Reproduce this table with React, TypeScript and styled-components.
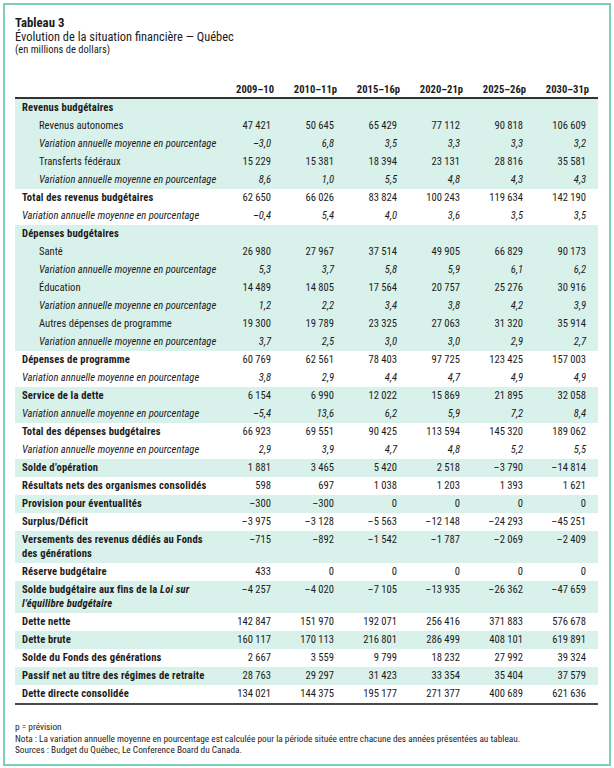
import React from "react";
import styled, { createGlobalStyle } from "styled-components";

const GlobalStyle = createGlobalStyle`
  html, body {
    margin: 0;
    padding: 0;
    background: #ffffff;
  }
  body {
    font-family: "Roboto Condensed", "Liberation Sans Narrow", "DejaVu Sans Condensed", sans-serif;
    color: #1c1c1c;
  }
`;

const Frame = styled.div`
  box-sizing: border-box;
  margin: 3px;
  width: 608px;
  height: 763px;
  border: 2px solid #7ccfb8;
  padding: 11px 11px 0 10px;
`;

const Title = styled.div`
  font-size: 12.8px;
  line-height: 14px;
  font-weight: bold;
`;

const Subtitle = styled.div`
  font-size: 12.4px;
  line-height: 14px;
`;

const Unit = styled.div`
  font-size: 10.5px;
  line-height: 12px;
`;

const Table = styled.table`
  margin-top: 27px;
  width: 583px;
  border-collapse: collapse;
  table-layout: fixed;
  font-size: 10.6px;
`;

const HeadCell = styled.th`
  text-align: right;
  font-weight: bold;
  line-height: 14px;
  padding: 0 9px 0 0;
  border-bottom: 2px solid #333333;
  white-space: nowrap;
`;

const Row = styled.tr<{ $shade?: boolean; $last?: boolean }>`
  background: ${(p) => (p.$shade ? "#d9f1eb" : "transparent")};
  border-bottom: ${(p) => (p.$last ? "2px solid #4a4a4a" : "none")};
`;

const Label = styled.td<{ $indent?: boolean; $bold?: boolean; $italic?: boolean }>`
  vertical-align: top;
  line-height: 14px;
  padding: 2px 0 2px ${(p) => (p.$indent ? 24 : 7)}px;
  font-weight: ${(p) => (p.$bold ? "bold" : "normal")};
  font-style: ${(p) => (p.$italic ? "italic" : "normal")};
  letter-spacing: ${(p) => (p.$bold ? "0.15px" : "0")};
  white-space: nowrap;
`;

const Value = styled.td<{ $italic?: boolean }>`
  vertical-align: top;
  text-align: right;
  line-height: 14px;
  padding: 2px 12px 2px 0;
  font-style: ${(p) => (p.$italic ? "italic" : "normal")};
  white-space: nowrap;
`;

const Notes = styled.div`
  margin-top: 16px;
  font-size: 9.3px;
  line-height: 11.5px;
`;

type Line = {
  label: React.ReactNode;
  values?: string[];
  indent?: boolean;
  bold?: boolean;
  italic?: boolean;
  shade?: boolean;
};

const VAR = "Variation annuelle moyenne en pourcentage";
const years = ["2009–10", "2010–11p", "2015–16p", "2020–21p", "2025–26p", "2030–31p"];

const rows: Line[] = [
  { label: "Revenus budgétaires", bold: true, shade: true },
  { label: "Revenus autonomes", indent: true, shade: true, values: ["47 421", "50 645", "65 429", "77 112", "90 818", "106 609"] },
  { label: VAR, indent: true, italic: true, shade: true, values: ["–3,0", "6,8", "3,5", "3,3", "3,3", "3,2"] },
  { label: "Transferts fédéraux", indent: true, shade: true, values: ["15 229", "15 381", "18 394", "23 131", "28 816", "35 581"] },
  { label: VAR, indent: true, italic: true, shade: true, values: ["8,6", "1,0", "5,5", "4,8", "4,3", "4,3"] },
  { label: "Total des revenus budgétaires", bold: true, values: ["62 650", "66 026", "83 824", "100 243", "119 634", "142 190"] },
  { label: VAR, italic: true, values: ["–0,4", "5,4", "4,0", "3,6", "3,5", "3,5"] },
  { label: "Dépenses budgétaires", bold: true, shade: true },
  { label: "Santé", indent: true, shade: true, values: ["26 980", "27 967", "37 514", "49 905", "66 829", "90 173"] },
  { label: VAR, indent: true, italic: true, shade: true, values: ["5,3", "3,7", "5,8", "5,9", "6,1", "6,2"] },
  { label: "Éducation", indent: true, shade: true, values: ["14 489", "14 805", "17 564", "20 757", "25 276", "30 916"] },
  { label: VAR, indent: true, italic: true, shade: true, values: ["1,2", "2,2", "3,4", "3,8", "4,2", "3,9"] },
  { label: "Autres dépenses de programme", indent: true, shade: true, values: ["19 300", "19 789", "23 325", "27 063", "31 320", "35 914"] },
  { label: VAR, indent: true, italic: true, shade: true, values: ["3,7", "2,5", "3,0", "3,0", "2,9", "2,7"] },
  { label: "Dépenses de programme", bold: true, values: ["60 769", "62 561", "78 403", "97 725", "123 425", "157 003"] },
  { label: VAR, italic: true, values: ["3,8", "2,9", "4,4", "4,7", "4,9", "4,9"] },
  { label: "Service de la dette", bold: true, shade: true, values: ["6 154", "6 990", "12 022", "15 869", "21 895", "32 058"] },
  { label: VAR, italic: true, shade: true, values: ["–5,4", "13,6", "6,2", "5,9", "7,2", "8,4"] },
  { label: "Total des dépenses budgétaires", bold: true, values: ["66 923", "69 551", "90 425", "113 594", "145 320", "189 062"] },
  { label: VAR, italic: true, values: ["2,9", "3,9", "4,7", "4,8", "5,2", "5,5"] },
  { label: "Solde d’opération", bold: true, shade: true, values: ["1 881", "3 465", "5 420", "2 518", "–3 790", "–14 814"] },
  { label: "Résultats nets des organismes consolidés", bold: true, values: ["598", "697", "1 038", "1 203", "1 393", "1 621"] },
  { label: "Provision pour éventualités", bold: true, shade: true, values: ["–300", "–300", "0", "0", "0", "0"] },
  { label: "Surplus/Déficit", bold: true, values: ["–3 975", "–3 128", "–5 563", "–12 148", "–24 293", "–45 251"] },
  {
    label: (
      <>
        Versements des revenus dédiés au Fonds
        <br />
        des générations
      </>
    ),
    bold: true,
    shade: true,
    values: ["–715", "–892", "–1 542", "–1 787", "–2 069", "–2 409"],
  },
  { label: "Réserve budgétaire", bold: true, values: ["433", "0", "0", "0", "0", "0"] },
  {
    label: (
      <>
        Solde budgétaire aux fins de la <i>Loi sur</i>
        <br />
        <i>l’équilibre budgétaire</i>
      </>
    ),
    bold: true,
    shade: true,
    values: ["–4 257", "–4 020", "–7 105", "–13 935", "–26 362", "–47 659"],
  },
  { label: "Dette nette", bold: true, values: ["142 847", "151 970", "192 071", "256 416", "371 883", "576 678"] },
  { label: "Dette brute", bold: true, shade: true, values: ["160 117", "170 113", "216 801", "286 499", "408 101", "619 891"] },
  { label: "Solde du Fonds des générations", bold: true, values: ["2 667", "3 559", "9 799", "18 232", "27 992", "39 324"] },
  { label: "Passif net au titre des régimes de retraite", bold: true, shade: true, values: ["28 763", "29 297", "31 423", "33 354", "35 404", "37 579"] },
  { label: "Dette directe consolidée", bold: true, values: ["134 021", "144 375", "195 177", "271 377", "400 689", "621 636"] },
];

export default function App() {
  return (
    <>
      <GlobalStyle />
      <Frame>
        <Title>Tableau 3</Title>
        <Subtitle>Évolution de la situation financière — Québec</Subtitle>
        <Unit>(en millions de dollars)</Unit>
        <Table>
          <colgroup>
            <col style={{ width: 205 }} />
            {years.map((y) => (
              <col key={y} style={{ width: 63 }} />
            ))}
          </colgroup>
          <thead>
            <tr>
              <HeadCell />
              {years.map((y) => (
                <HeadCell key={y}>{y}</HeadCell>
              ))}
            </tr>
          </thead>
          <tbody>
            {rows.map((r, i) => (
              <Row key={i} $shade={r.shade} $last={i === rows.length - 1}>
                <Label $indent={r.indent} $bold={r.bold} $italic={r.italic}>
                  {r.label}
                </Label>
                {years.map((y, j) => (
                  <Value key={y} $italic={r.italic}>
                    {r.values ? r.values[j] : ""}
                  </Value>
                ))}
              </Row>
            ))}
          </tbody>
        </Table>
        <Notes>
          <div>p = prévision</div>
          <div>
            Nota : La variation annuelle moyenne en pourcentage est calculée pour la période située entre chacune des
            années présentées au tableau.
          </div>
          <div>Sources : Budget du Québec, Le Conference Board du Canada.</div>
        </Notes>
      </Frame>
    </>
  );
}
